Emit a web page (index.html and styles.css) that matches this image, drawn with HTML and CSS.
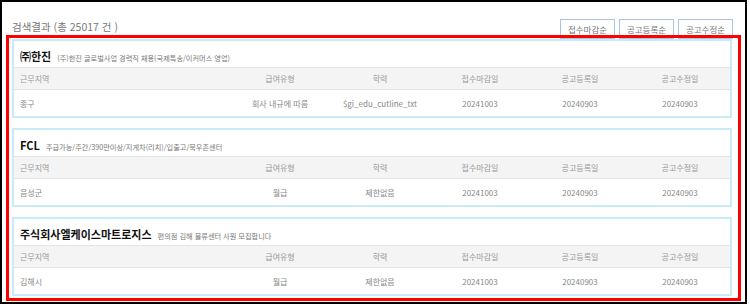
FILE: index.html
```html
<!DOCTYPE html>
<html lang="ko">

<head>
    <meta charset="UTF-8">
    <meta name="viewport" content="width=device-width, initial-scale=1.0">
    <title>검색결과</title>
    <link rel="stylesheet" href="styles.css">
</head>

<body>
    <div class="frame">
        <div class="top">
            <h2 class="count">검색결과 (총 25017 건 )</h2>
            <div class="sort">
                <a class="btn">접수마감순</a>
                <a class="btn">공고등록순</a>
                <a class="btn">공고수정순</a>
            </div>
        </div>
        <ul class="list">
            <li class="card">
                <div class="title"><strong>㈜한진</strong><span>(주)한진 글로벌사업 경력직 채용(국제특송/이커머스 영업)</span></div>
                <div class="row head">
                    <span class="first">근무지역</span><span>급여유형</span><span>학력</span><span>접수마감일</span><span>공고등록일</span><span>공고수정일</span>
                </div>
                <div class="row">
                    <span class="first">종구</span><span>회사 내규에 따름</span><span>$gi_edu_cutline_txt</span><span>20241003</span><span>20240903</span><span>20240903</span>
                </div>
            </li>
            <li class="card">
                <div class="title"><strong>FCL</strong><span>주급가능/주간/390만이상/지게차(리치)/입출고/묵우촌센터</span></div>
                <div class="row head">
                    <span class="first">근무지역</span><span>급여유형</span><span>학력</span><span>접수마감일</span><span>공고등록일</span><span>공고수정일</span>
                </div>
                <div class="row">
                    <span class="first">음성군</span><span>월급</span><span>제한없음</span><span>20241003</span><span>20240903</span><span>20240903</span>
                </div>
            </li>
            <li class="card">
                <div class="title"><strong>주식회사엘케이스마트로지스</strong><span>편의점 김해 물류센터 사원 모집합니다</span></div>
                <div class="row head">
                    <span class="first">근무지역</span><span>급여유형</span><span>학력</span><span>접수마감일</span><span>공고등록일</span><span>공고수정일</span>
                </div>
                <div class="row">
                    <span class="first">김해시</span><span>월급</span><span>제한없음</span><span>20241003</span><span>20240903</span><span>20240903</span>
                </div>
            </li>
        </ul>
        <div class="mark"></div>
    </div>
</body>

</html>
```

FILE: styles.css
```css
* {
    box-sizing: border-box;
}

body {
    margin: 0;
    background: #fff;
    font-family: "Noto Sans CJK KR", "Noto Sans", sans-serif;
}

ul {
    padding: 0;
    margin: 0;
}

li {
    list-style: none;
}

.frame {
    position: relative;
    width: 747px;
    height: 304px;
    border: 2px solid #000;
    padding: 17px 13px 0 10px;
}

.top {
    display: flex;
    justify-content: space-between;
    align-items: center;
    height: 20px;
    margin-right: -1px;
}

.count {
    margin: 0;
    font-size: 10.5px;
    font-weight: normal;
    color: #777;
    position: relative;
    top: -3px;
}

.sort {
    display: flex;
    gap: 4px;
}

.btn {
    display: block;
    width: 55px;
    height: 20px;
    line-height: 18px;
    border: 1px solid #a9c4ec;
    text-align: center;
    font-size: 8.5px;
    color: #777;
}

.list {
    display: flex;
    flex-direction: column;
    gap: 10px;
}

.card {
    width: 720px;
    border: 2px solid #c8ebf6;
}

.title {
    height: 26px;
    display: flex;
    align-items: baseline;
    gap: 6px;
    padding: 7px 0 0 6px;
}

.title strong {
    font-size: 11px;
    color: #111;
}

.title span {
    font-size: 7.2px;
    color: #777;
}

.row {
    display: grid;
    grid-template-columns: 216px repeat(5, 100px);
    align-items: center;
    height: 26px;
    font-size: 8px;
    color: #888;
}

.row span {
    text-align: center;
    white-space: nowrap;
}

.row .first {
    text-align: left;
    padding-left: 6px;
}

.head {
    height: 23px;
    background: #f4f4f4;
    border-top: 1px solid #e4e4e4;
    border-bottom: 1px solid #e4e4e4;
    color: #999;
}

.mark {
    position: absolute;
    left: 4px;
    top: 33px;
    width: 735px;
    height: 266px;
    border: 3px solid #f00;
}
```
